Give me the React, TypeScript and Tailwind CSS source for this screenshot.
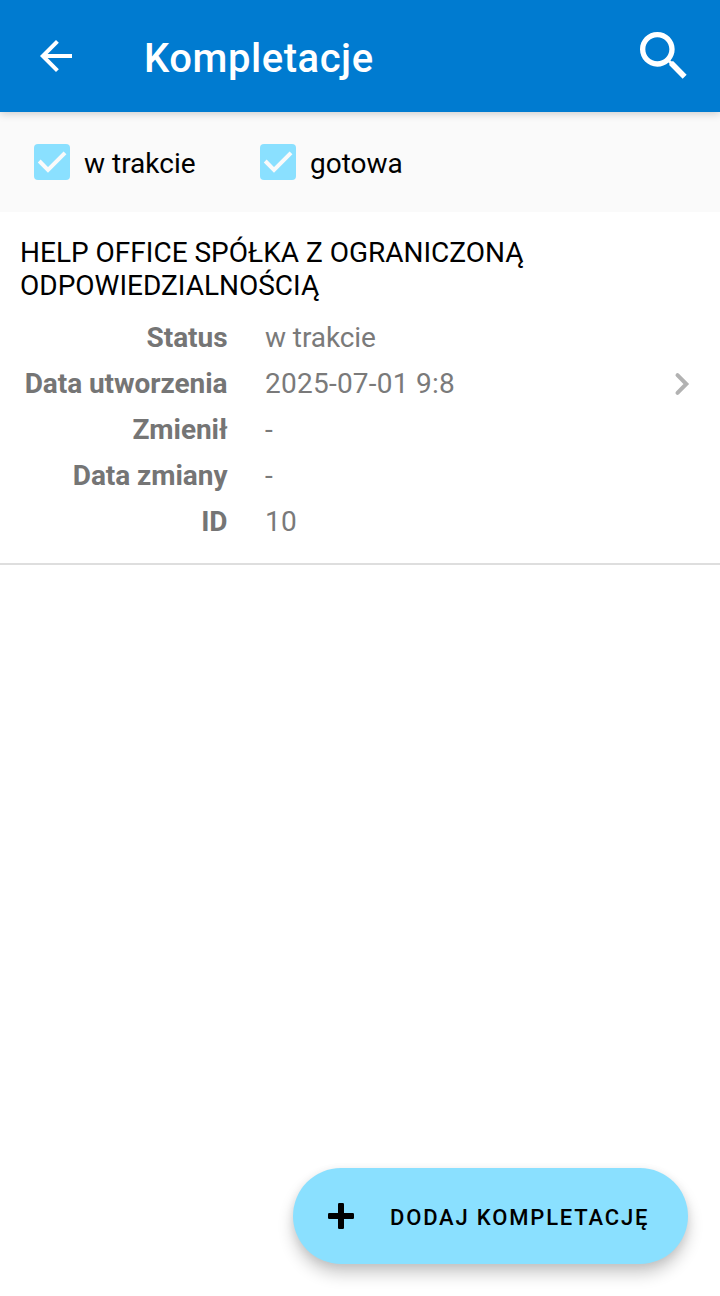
const filters = [
  { label: "w trakcie", width: "w-[226px]" },
  { label: "gotowa", width: "w-[200px]" },
];

const details = [
  { label: "Status", value: "w trakcie", spacing: "tracking-[-0.08px]" },
  { label: "Data utworzenia", value: "2025-07-01 9:8", spacing: "tracking-[0.24px]" },
  { label: "Zmienił", value: "-", spacing: "" },
  { label: "Data zmiany", value: "-", spacing: "" },
  { label: "ID", value: "10", spacing: "tracking-[0.24px]" },
];

function Checkbox({ label, width }: { label: string; width: string }) {
  return (
    <label className={`flex items-center ${width}`}>
      <svg viewBox="0 0 36 36" className="-mt-[3px] mr-[14px] h-9 w-9 shrink-0">
        <rect width="36" height="36" rx="4" fill="#8AE0FF" />
        <path d="M5.2 17 14 25.8 31 8.8" fill="none" stroke="#FAFAFA" strokeWidth="4" />
      </svg>
      <span className="mt-[2px] text-[28px] leading-9 text-black">{label}</span>
    </label>
  );
}

export default function App() {
  return (
    <div className="flex h-[1296px] w-[720px] flex-col bg-white font-['Roboto',sans-serif]">
      <header className="relative z-10 flex h-28 shrink-0 items-center bg-[#007BD0] pl-8 pr-6 text-white shadow-[0_2px_8px_rgba(0,0,0,0.18)]">
        <button aria-label="Wstecz">
          <svg viewBox="0 0 24 24" className="h-12 w-12" fill="currentColor">
            <path d="M20 11H7.83l5.59-5.59L12 4l-8 8 8 8 1.41-1.41L7.83 13H20v-2z" />
          </svg>
        </button>
        <h1 className="ml-16 mt-1.5 flex-1 text-[40px] font-medium leading-[48px] tracking-[0.55px]">
          Kompletacje
        </h1>
        <button aria-label="Szukaj">
          <svg viewBox="0 0 24 24" className="h-16 w-16" fill="currentColor">
            <path d="M15.5 14h-.79l-.28-.27C15.41 12.59 16 11.11 16 9.5 16 5.91 13.09 3 9.5 3S3 5.91 3 9.5 5.91 16 9.5 16c1.61 0 3.09-.59 4.23-1.57l.27.28v.79l5 4.99L20.49 19l-4.99-5zm-6 0C7.01 14 5 11.99 5 9.5S7.01 5 9.5 5 14 7.01 14 9.5 11.99 14 9.5 14z" />
          </svg>
        </button>
      </header>

      <div className="flex h-[100px] shrink-0 items-center bg-[#FAFAFA] pb-px pl-[34px] pt-[3px]">
        {filters.map((filter) => (
          <Checkbox key={filter.label} label={filter.label} width={filter.width} />
        ))}
      </div>

      <main className="flex-1">
        <article className="flex h-[353px] items-center border-b-2 border-[#DEDEDE]">
          <div className="h-full w-[640px] pt-6">
            <h2 className="w-[560px] pl-5 text-[28px] leading-[33px] text-black">
              HELP OFFICE SPÓŁKA Z OGRANICZONĄ ODPOWIEDZIALNOŚCIĄ
            </h2>
            <dl className="mt-[13px] text-[28px] leading-[46px] text-[#757575]">
              {details.map((row) => (
                <div key={row.label} className="flex">
                  <dt className="w-[227.5px] text-right font-bold tracking-[-0.05px]">{row.label}</dt>
                  <dd className={`ml-[37.5px] text-[#7A7A7A] ${row.spacing}`}>{row.value}</dd>
                </div>
              ))}
            </dl>
          </div>
          <svg viewBox="0 0 20 24" className="ml-8 h-6 w-5 -mt-[7px]" fill="none">
            <path d="M5.5 3.2 14.3 12 5.5 20.8" stroke="#B2B2B2" strokeWidth="4" strokeLinecap="round" />
          </svg>
        </article>
      </main>

      <footer className="flex shrink-0 justify-end pb-8 pr-8">
        <button className="flex h-24 w-[395px] items-center rounded-full bg-[#8AE0FF] pl-[35px] text-black shadow-[0_10px_16px_rgba(0,0,0,0.2),0_2px_8px_rgba(0,0,0,0.08)]">
          <svg viewBox="0 0 26 26" className="h-[26px] w-[26px]" fill="currentColor">
            <rect x="10" width="6" height="26" rx="1.2" />
            <rect y="10" width="26" height="6" rx="1.2" />
          </svg>
          <span className="ml-9 mt-[4px] whitespace-nowrap text-[22px] font-medium leading-[30px] tracking-[1.82px]">
            DODAJ KOMPLETACJĘ
          </span>
        </button>
      </footer>
    </div>
  );
}
